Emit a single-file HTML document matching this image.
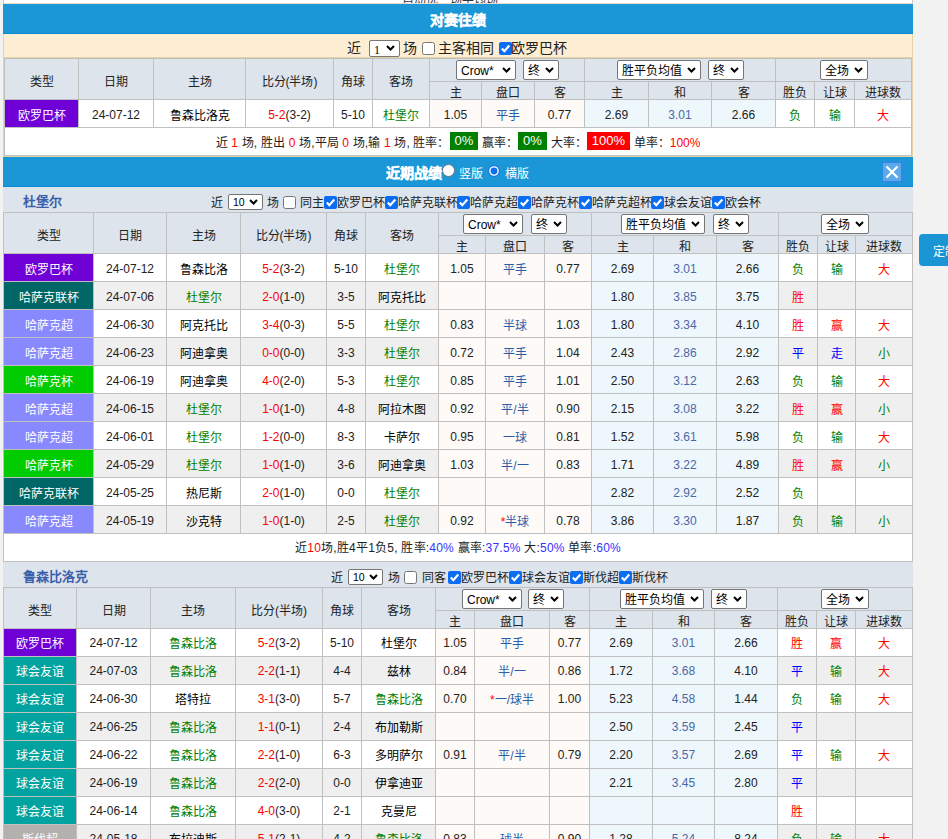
<!DOCTYPE html><html lang="zh-CN"><head><meta charset="utf-8"><style>
html,body{margin:0;padding:0}
body{width:948px;height:839px;overflow:hidden;position:relative;background:#f2f2f2;font-family:"Liberation Sans",sans-serif;font-size:12px;color:#222}
.t{position:absolute;display:flex;align-items:center;justify-content:center;white-space:nowrap;overflow:hidden}
.sel{position:absolute;background:#fff;border:1px solid #767676;border-radius:2px;color:#000;line-height:17px;padding-left:4px;box-sizing:content-box;white-space:nowrap}
.sel span{position:relative}
</style></head><body>
<div style="position:absolute;left:3px;top:0px;width:908px;height:4px;background:#fff;border-left:1px solid #c8c8c8;border-right:1px solid #c8c8c8"></div>
<div style="position:absolute;left:402px;top:-9px;font-size:12px;color:#333;white-space:nowrap">自动选一场平均场</div>
<div style="position:absolute;left:3px;top:3px;width:910px;height:1px;background:#e8dcc8"></div>
<div style="position:absolute;left:3px;top:4px;width:910px;height:30px;background:#1b96d6"></div>
<div style="position:absolute;left:3px;top:33px;width:910px;height:1px;background:#0c8acf"></div>
<div class="t" style="left:3px;top:4px;width:910px;height:29px;color:#fff;font-weight:bold;font-size:14px;-webkit-text-stroke:0.3px #fff"><span>对赛往绩</span></div>
<div style="position:absolute;left:3px;top:34px;width:910px;height:123px;background:#fdeed4"></div>
<div style="position:absolute;left:3px;top:34px;width:1px;height:123px;background:#e6d2a3"></div>
<div style="position:absolute;left:912px;top:34px;width:1px;height:123px;background:#e6d2a3"></div>
<div style="position:absolute;left:3px;top:156px;width:910px;height:1px;background:#e6d2a3"></div>
<div style="position:absolute;left:3px;top:57px;width:910px;height:1px;background:#e6d2a3"></div>
<div class="t" style="left:347px;top:35px;width:14px;height:23px;font-size:14px;justify-content:flex-start"><span>近</span></div>
<div class="sel" style="left:369px;top:40px;width:25px;height:15px;line-height:18px"><span style="font-size:12px"><span style="font-family:Liberation Serif;font-size:12px">1</span></span><svg width="9" height="6" viewBox="0 0 9 6" style="position:absolute;right:4px;top:4px"><path d="M1 1 L4.5 4.5 L8 1" fill="none" stroke="#000" stroke-width="2"/></svg></div>
<div class="t" style="left:403px;top:35px;width:15px;height:23px;font-size:14px;justify-content:flex-start"><span>场</span></div>
<svg style="position:absolute;left:422px;top:42px" width="13" height="13" viewBox="0 0 13 13"><rect x="0.5" y="0.5" width="12" height="12" rx="2" fill="#fff" stroke="#767676"/></svg>
<div class="t" style="left:438px;top:35px;width:60px;height:23px;font-size:14px;justify-content:flex-start"><span>主客相同</span></div>
<svg style="position:absolute;left:499px;top:42px" width="13" height="13" viewBox="0 0 13 13"><rect x="0" y="0" width="13" height="13" rx="2" fill="#0b6ef2"/><path d="M2.8 6.6 L5.3 9.2 L10.3 3.6" fill="none" stroke="#fff" stroke-width="2.2"/></svg>
<div class="t" style="left:511px;top:35px;width:60px;height:23px;font-size:14px;justify-content:flex-start"><span>欧罗巴杯</span></div>
<div style="position:absolute;left:4px;top:58px;width:908px;height:41px;background:#dde4ec"></div>
<div style="position:absolute;left:4px;top:99px;width:74px;height:28px;background:#6f00d6"></div>
<div style="position:absolute;left:78px;top:99px;width:75px;height:28px;background:#fff"></div>
<div style="position:absolute;left:153px;top:99px;width:92px;height:28px;background:#fff"></div>
<div style="position:absolute;left:245px;top:99px;width:88px;height:28px;background:#fff"></div>
<div style="position:absolute;left:333px;top:99px;width:39px;height:28px;background:#fff"></div>
<div style="position:absolute;left:372px;top:99px;width:57px;height:28px;background:#fff"></div>
<div style="position:absolute;left:429px;top:99px;width:52px;height:28px;background:#fdfaf7"></div>
<div style="position:absolute;left:481px;top:99px;width:53px;height:28px;background:#fdfaf7"></div>
<div style="position:absolute;left:534px;top:99px;width:50px;height:28px;background:#fdfaf7"></div>
<div style="position:absolute;left:584px;top:99px;width:64px;height:28px;background:#eef7fc"></div>
<div style="position:absolute;left:648px;top:99px;width:63px;height:28px;background:#eef7fc"></div>
<div style="position:absolute;left:711px;top:99px;width:64px;height:28px;background:#eef7fc"></div>
<div style="position:absolute;left:775px;top:99px;width:39px;height:28px;background:#fff"></div>
<div style="position:absolute;left:814px;top:99px;width:40px;height:28px;background:#fff"></div>
<div style="position:absolute;left:854px;top:99px;width:57px;height:28px;background:#fff"></div>
<div style="position:absolute;left:4px;top:127px;width:907px;height:28px;background:#fff"></div>
<div style="position:absolute;left:4px;top:58px;width:908px;height:1px;background:#c0c0c0"></div>
<div style="position:absolute;left:4px;top:58px;width:1px;height:98px;background:#c0c0c0"></div>
<div style="position:absolute;left:911px;top:58px;width:1px;height:98px;background:#c0c0c0"></div>
<div style="position:absolute;left:78px;top:58px;width:1px;height:41px;background:#c0c0c0"></div>
<div style="position:absolute;left:153px;top:58px;width:1px;height:41px;background:#c0c0c0"></div>
<div style="position:absolute;left:245px;top:58px;width:1px;height:41px;background:#c0c0c0"></div>
<div style="position:absolute;left:333px;top:58px;width:1px;height:41px;background:#c0c0c0"></div>
<div style="position:absolute;left:372px;top:58px;width:1px;height:41px;background:#c0c0c0"></div>
<div style="position:absolute;left:429px;top:58px;width:1px;height:41px;background:#c0c0c0"></div>
<div style="position:absolute;left:481px;top:81px;width:1px;height:18px;background:#c0c0c0"></div>
<div style="position:absolute;left:534px;top:81px;width:1px;height:18px;background:#c0c0c0"></div>
<div style="position:absolute;left:584px;top:58px;width:1px;height:41px;background:#c0c0c0"></div>
<div style="position:absolute;left:648px;top:81px;width:1px;height:18px;background:#c0c0c0"></div>
<div style="position:absolute;left:711px;top:81px;width:1px;height:18px;background:#c0c0c0"></div>
<div style="position:absolute;left:775px;top:58px;width:1px;height:41px;background:#c0c0c0"></div>
<div style="position:absolute;left:814px;top:81px;width:1px;height:18px;background:#c0c0c0"></div>
<div style="position:absolute;left:854px;top:81px;width:1px;height:18px;background:#c0c0c0"></div>
<div style="position:absolute;left:429px;top:81px;width:482px;height:1px;background:#c0c0c0"></div>
<div style="position:absolute;left:4px;top:99px;width:908px;height:1px;background:#c0c0c0"></div>
<div style="position:absolute;left:4px;top:127px;width:908px;height:1px;background:#c0c0c0"></div>
<div style="position:absolute;left:4px;top:155px;width:908px;height:1px;background:#c0c0c0"></div>
<div style="position:absolute;left:78px;top:99px;width:1px;height:28px;background:#c0c0c0"></div>
<div style="position:absolute;left:153px;top:99px;width:1px;height:28px;background:#c0c0c0"></div>
<div style="position:absolute;left:245px;top:99px;width:1px;height:28px;background:#c0c0c0"></div>
<div style="position:absolute;left:333px;top:99px;width:1px;height:28px;background:#c0c0c0"></div>
<div style="position:absolute;left:372px;top:99px;width:1px;height:28px;background:#c0c0c0"></div>
<div style="position:absolute;left:429px;top:99px;width:1px;height:28px;background:#c0c0c0"></div>
<div style="position:absolute;left:481px;top:99px;width:1px;height:28px;background:#c0c0c0"></div>
<div style="position:absolute;left:534px;top:99px;width:1px;height:28px;background:#c0c0c0"></div>
<div style="position:absolute;left:584px;top:99px;width:1px;height:28px;background:#c0c0c0"></div>
<div style="position:absolute;left:648px;top:99px;width:1px;height:28px;background:#c0c0c0"></div>
<div style="position:absolute;left:711px;top:99px;width:1px;height:28px;background:#c0c0c0"></div>
<div style="position:absolute;left:775px;top:99px;width:1px;height:28px;background:#c0c0c0"></div>
<div style="position:absolute;left:814px;top:99px;width:1px;height:28px;background:#c0c0c0"></div>
<div style="position:absolute;left:854px;top:99px;width:1px;height:28px;background:#c0c0c0"></div>
<div class="t" style="left:5px;top:60px;width:73px;height:40px;"><span>类型</span></div>
<div class="t" style="left:79px;top:60px;width:74px;height:40px;"><span>日期</span></div>
<div class="t" style="left:154px;top:60px;width:91px;height:40px;"><span>主场</span></div>
<div class="t" style="left:246px;top:60px;width:87px;height:40px;"><span>比分(半场)</span></div>
<div class="t" style="left:334px;top:60px;width:38px;height:40px;"><span>角球</span></div>
<div class="t" style="left:373px;top:60px;width:56px;height:40px;"><span>客场</span></div>
<div class="t" style="left:430px;top:83px;width:51px;height:17px;"><span>主</span></div>
<div class="t" style="left:482px;top:83px;width:52px;height:17px;"><span>盘口</span></div>
<div class="t" style="left:535px;top:83px;width:49px;height:17px;"><span>客</span></div>
<div class="t" style="left:585px;top:83px;width:63px;height:17px;"><span>主</span></div>
<div class="t" style="left:649px;top:83px;width:62px;height:17px;"><span>和</span></div>
<div class="t" style="left:712px;top:83px;width:63px;height:17px;"><span>客</span></div>
<div class="t" style="left:776px;top:83px;width:38px;height:17px;"><span>胜负</span></div>
<div class="t" style="left:815px;top:83px;width:39px;height:17px;"><span>让球</span></div>
<div class="t" style="left:855px;top:83px;width:56px;height:17px;"><span>进球数</span></div>
<div class="sel" style="left:456px;top:60px;width:54px;height:18px;line-height:21px"><span style="font-size:12px">Crow*</span><svg width="9" height="6" viewBox="0 0 9 6" style="position:absolute;right:4px;top:6px"><path d="M1 1 L4.5 4.5 L8 1" fill="none" stroke="#000" stroke-width="2"/></svg></div>
<div class="sel" style="left:523px;top:60px;width:30px;height:18px;line-height:21px"><span style="font-size:12px">终</span><svg width="9" height="6" viewBox="0 0 9 6" style="position:absolute;right:4px;top:6px"><path d="M1 1 L4.5 4.5 L8 1" fill="none" stroke="#000" stroke-width="2"/></svg></div>
<div class="sel" style="left:617px;top:60px;width:78px;height:18px;line-height:21px"><span style="font-size:12px">胜平负均值</span><svg width="9" height="6" viewBox="0 0 9 6" style="position:absolute;right:4px;top:6px"><path d="M1 1 L4.5 4.5 L8 1" fill="none" stroke="#000" stroke-width="2"/></svg></div>
<div class="sel" style="left:708px;top:60px;width:30px;height:18px;line-height:21px"><span style="font-size:12px">终</span><svg width="9" height="6" viewBox="0 0 9 6" style="position:absolute;right:4px;top:6px"><path d="M1 1 L4.5 4.5 L8 1" fill="none" stroke="#000" stroke-width="2"/></svg></div>
<div class="sel" style="left:820px;top:60px;width:42px;height:18px;line-height:21px"><span style="font-size:12px">全场</span><svg width="9" height="6" viewBox="0 0 9 6" style="position:absolute;right:4px;top:6px"><path d="M1 1 L4.5 4.5 L8 1" fill="none" stroke="#000" stroke-width="2"/></svg></div>
<div class="t" style="left:5px;top:101px;width:73px;height:27px;color:#fff"><span>欧罗巴杯</span></div>
<div class="t" style="left:79px;top:101px;width:74px;height:27px;"><span>24-07-12</span></div>
<div class="t" style="left:154px;top:101px;width:91px;height:27px;"><span><span style="color:#000">鲁森比洛克</span></span></div>
<div class="t" style="left:246px;top:101px;width:87px;height:27px;"><span><span style="color:#ff0000">5-2</span>(3-2)</span></div>
<div class="t" style="left:334px;top:101px;width:38px;height:27px;"><span>5-10</span></div>
<div class="t" style="left:373px;top:101px;width:56px;height:27px;"><span><span style="color:#008000">杜堡尔</span></span></div>
<div class="t" style="left:430px;top:101px;width:51px;height:27px;"><span>1.05</span></div>
<div class="t" style="left:482px;top:101px;width:52px;height:27px;"><span><span style="color:#2a5ca8">平手</span></span></div>
<div class="t" style="left:535px;top:101px;width:49px;height:27px;"><span>0.77</span></div>
<div class="t" style="left:585px;top:101px;width:63px;height:27px;"><span>2.69</span></div>
<div class="t" style="left:649px;top:101px;width:62px;height:27px;"><span><span style="color:#4a68a8">3.01</span></span></div>
<div class="t" style="left:712px;top:101px;width:63px;height:27px;"><span>2.66</span></div>
<div class="t" style="left:776px;top:101px;width:38px;height:27px;"><span><span style="color:#008000">负</span></span></div>
<div class="t" style="left:815px;top:101px;width:39px;height:27px;"><span><span style="color:#008000">输</span></span></div>
<div class="t" style="left:855px;top:101px;width:56px;height:27px;"><span><span style="color:#ff0000">大</span></span></div>
<div style="position:absolute;left:7px;top:129px;width:906px;height:26px;padding-top:1px;line-height:27px;text-align:center;white-space:nowrap;word-spacing:0.45px;margin-left:-2px">近 <span style="color:#ff0000">1</span> 场, 胜出 <span style="color:#ff0000">0</span> 场,平局 <span style="color:#ff0000">0</span> 场,输 <span style="color:#ff0000">1</span> 场, 胜率：<span style="background:#008000;color:#fff;padding:0 5px;margin:0;display:inline-block;line-height:18px;height:18px;font-size:13px;vertical-align:top;position:relative;top:2px">0%</span> 赢率：<span style="background:#008000;color:#fff;padding:0 5px;margin:0;display:inline-block;line-height:18px;height:18px;font-size:13px;vertical-align:top;position:relative;top:2px">0%</span> 大率：<span style="background:#ff0000;color:#fff;padding:0 5px;margin:0;display:inline-block;line-height:18px;height:18px;font-size:13px;vertical-align:top;position:relative;top:2px">100%</span> 单率：<span style="color:#ff0000">100%</span></div>
<div style="position:absolute;left:3px;top:157px;width:910px;height:30px;background:#1b96d6"></div>
<div style="position:absolute;left:3px;top:186px;width:910px;height:1px;background:#0c8acf"></div>
<div class="t" style="left:386px;top:157px;width:60px;height:29px;color:#fff;font-weight:bold;font-size:14px;-webkit-text-stroke:0.3px #fff;justify-content:flex-start"><span>近期战绩</span></div>
<svg style="position:absolute;left:442px;top:164px" width="13" height="13" viewBox="0 0 13 13"><circle cx="6.5" cy="6.5" r="6" fill="#fff" stroke="#767676"/></svg>
<div class="t" style="left:459px;top:158px;width:30px;height:29px;color:#fff;font-size:12px;justify-content:flex-start"><span>竖版</span></div>
<svg style="position:absolute;left:488px;top:165px" width="12" height="12" viewBox="0 0 12 12"><circle cx="6" cy="6" r="6" fill="#1a7ae8"/><circle cx="6" cy="6" r="4.8" fill="#fff"/><circle cx="6" cy="6" r="3.4" fill="#0b6ef2"/></svg>
<div class="t" style="left:505px;top:158px;width:30px;height:29px;color:#fff;font-size:12px;justify-content:flex-start"><span>横版</span></div>
<svg style="position:absolute;left:881px;top:161px" width="22" height="22" viewBox="0 0 22 22"><rect x="0" y="0" width="22" height="22" fill="#2b8be3"/><rect x="2" y="2" width="18" height="18" fill="#5ba9e9"/><path d="M5.5 5.5 L16.5 16.5 M16.5 5.5 L5.5 16.5" stroke="#fff" stroke-width="2.2"/></svg>
<div style="position:absolute;left:3px;top:187px;width:910px;height:25px;background:#dde4ec"></div>
<div class="t" style="left:23px;top:188px;width:80px;height:25px;color:#3a5fab;font-weight:bold;font-size:13px;justify-content:flex-start"><span>杜堡尔</span></div>
<div class="t" style="left:211px;top:189px;width:14px;height:25px;justify-content:flex-start"><span>近</span></div>
<div class="sel" style="left:228px;top:194px;width:29px;height:14px;line-height:15px"><span style="font-size:10.5px">10</span><svg width="9" height="6" viewBox="0 0 9 6" style="position:absolute;right:4px;top:4px"><path d="M1 1 L4.5 4.5 L8 1" fill="none" stroke="#000" stroke-width="2"/></svg></div>
<div class="t" style="left:267px;top:189px;width:14px;height:25px;justify-content:flex-start"><span>场</span></div>
<svg style="position:absolute;left:283px;top:196px" width="13" height="13" viewBox="0 0 13 13"><rect x="0.5" y="0.5" width="12" height="12" rx="2" fill="#fff" stroke="#767676"/></svg>
<div class="t" style="left:300px;top:189px;width:30px;height:25px;justify-content:flex-start"><span>同主</span></div>
<svg style="position:absolute;left:324px;top:196px" width="13" height="13" viewBox="0 0 13 13"><rect x="0" y="0" width="13" height="13" rx="2" fill="#0b6ef2"/><path d="M2.8 6.6 L5.3 9.2 L10.3 3.6" fill="none" stroke="#fff" stroke-width="2.2"/></svg>
<div class="t" style="left:337px;top:189px;width:60px;height:25px;justify-content:flex-start"><span>欧罗巴杯</span></div>
<svg style="position:absolute;left:385px;top:196px" width="13" height="13" viewBox="0 0 13 13"><rect x="0" y="0" width="13" height="13" rx="2" fill="#0b6ef2"/><path d="M2.8 6.6 L5.3 9.2 L10.3 3.6" fill="none" stroke="#fff" stroke-width="2.2"/></svg>
<div class="t" style="left:398px;top:189px;width:70px;height:25px;justify-content:flex-start"><span>哈萨克联杯</span></div>
<svg style="position:absolute;left:457px;top:196px" width="13" height="13" viewBox="0 0 13 13"><rect x="0" y="0" width="13" height="13" rx="2" fill="#0b6ef2"/><path d="M2.8 6.6 L5.3 9.2 L10.3 3.6" fill="none" stroke="#fff" stroke-width="2.2"/></svg>
<div class="t" style="left:470px;top:189px;width:60px;height:25px;justify-content:flex-start"><span>哈萨克超</span></div>
<svg style="position:absolute;left:518px;top:196px" width="13" height="13" viewBox="0 0 13 13"><rect x="0" y="0" width="13" height="13" rx="2" fill="#0b6ef2"/><path d="M2.8 6.6 L5.3 9.2 L10.3 3.6" fill="none" stroke="#fff" stroke-width="2.2"/></svg>
<div class="t" style="left:531px;top:189px;width:60px;height:25px;justify-content:flex-start"><span>哈萨克杯</span></div>
<svg style="position:absolute;left:579px;top:196px" width="13" height="13" viewBox="0 0 13 13"><rect x="0" y="0" width="13" height="13" rx="2" fill="#0b6ef2"/><path d="M2.8 6.6 L5.3 9.2 L10.3 3.6" fill="none" stroke="#fff" stroke-width="2.2"/></svg>
<div class="t" style="left:592px;top:189px;width:70px;height:25px;justify-content:flex-start"><span>哈萨克超杯</span></div>
<svg style="position:absolute;left:651px;top:196px" width="13" height="13" viewBox="0 0 13 13"><rect x="0" y="0" width="13" height="13" rx="2" fill="#0b6ef2"/><path d="M2.8 6.6 L5.3 9.2 L10.3 3.6" fill="none" stroke="#fff" stroke-width="2.2"/></svg>
<div class="t" style="left:664px;top:189px;width:60px;height:25px;justify-content:flex-start"><span>球会友谊</span></div>
<svg style="position:absolute;left:712px;top:196px" width="13" height="13" viewBox="0 0 13 13"><rect x="0" y="0" width="13" height="13" rx="2" fill="#0b6ef2"/><path d="M2.8 6.6 L5.3 9.2 L10.3 3.6" fill="none" stroke="#fff" stroke-width="2.2"/></svg>
<div class="t" style="left:725px;top:189px;width:50px;height:25px;justify-content:flex-start"><span>欧会杯</span></div>
<div style="position:absolute;left:3px;top:212px;width:910px;height:41px;background:#dde4ec"></div>
<div style="position:absolute;left:3px;top:253px;width:90px;height:28px;background:#6f00d6"></div>
<div style="position:absolute;left:93px;top:253px;width:73px;height:28px;background:#fff"></div>
<div style="position:absolute;left:166px;top:253px;width:74px;height:28px;background:#fff"></div>
<div style="position:absolute;left:240px;top:253px;width:86px;height:28px;background:#fff"></div>
<div style="position:absolute;left:326px;top:253px;width:39px;height:28px;background:#fff"></div>
<div style="position:absolute;left:365px;top:253px;width:73px;height:28px;background:#fff"></div>
<div style="position:absolute;left:438px;top:253px;width:47px;height:28px;background:#fdfaf7"></div>
<div style="position:absolute;left:485px;top:253px;width:59px;height:28px;background:#fdfaf7"></div>
<div style="position:absolute;left:544px;top:253px;width:47px;height:28px;background:#fdfaf7"></div>
<div style="position:absolute;left:591px;top:253px;width:62px;height:28px;background:#eef7fc"></div>
<div style="position:absolute;left:653px;top:253px;width:63px;height:28px;background:#eef7fc"></div>
<div style="position:absolute;left:716px;top:253px;width:62px;height:28px;background:#eef7fc"></div>
<div style="position:absolute;left:778px;top:253px;width:39px;height:28px;background:#fff"></div>
<div style="position:absolute;left:817px;top:253px;width:38px;height:28px;background:#fff"></div>
<div style="position:absolute;left:855px;top:253px;width:57px;height:28px;background:#fff"></div>
<div style="position:absolute;left:3px;top:281px;width:90px;height:28px;background:#006666"></div>
<div style="position:absolute;left:93px;top:281px;width:73px;height:28px;background:#efefef"></div>
<div style="position:absolute;left:166px;top:281px;width:74px;height:28px;background:#efefef"></div>
<div style="position:absolute;left:240px;top:281px;width:86px;height:28px;background:#efefef"></div>
<div style="position:absolute;left:326px;top:281px;width:39px;height:28px;background:#efefef"></div>
<div style="position:absolute;left:365px;top:281px;width:73px;height:28px;background:#efefef"></div>
<div style="position:absolute;left:438px;top:281px;width:47px;height:28px;background:#fdfaf7"></div>
<div style="position:absolute;left:485px;top:281px;width:59px;height:28px;background:#fdfaf7"></div>
<div style="position:absolute;left:544px;top:281px;width:47px;height:28px;background:#fdfaf7"></div>
<div style="position:absolute;left:591px;top:281px;width:62px;height:28px;background:#eef7fc"></div>
<div style="position:absolute;left:653px;top:281px;width:63px;height:28px;background:#eef7fc"></div>
<div style="position:absolute;left:716px;top:281px;width:62px;height:28px;background:#eef7fc"></div>
<div style="position:absolute;left:778px;top:281px;width:39px;height:28px;background:#efefef"></div>
<div style="position:absolute;left:817px;top:281px;width:38px;height:28px;background:#efefef"></div>
<div style="position:absolute;left:855px;top:281px;width:57px;height:28px;background:#efefef"></div>
<div style="position:absolute;left:3px;top:309px;width:90px;height:28px;background:#8989ff"></div>
<div style="position:absolute;left:93px;top:309px;width:73px;height:28px;background:#fff"></div>
<div style="position:absolute;left:166px;top:309px;width:74px;height:28px;background:#fff"></div>
<div style="position:absolute;left:240px;top:309px;width:86px;height:28px;background:#fff"></div>
<div style="position:absolute;left:326px;top:309px;width:39px;height:28px;background:#fff"></div>
<div style="position:absolute;left:365px;top:309px;width:73px;height:28px;background:#fff"></div>
<div style="position:absolute;left:438px;top:309px;width:47px;height:28px;background:#fdfaf7"></div>
<div style="position:absolute;left:485px;top:309px;width:59px;height:28px;background:#fdfaf7"></div>
<div style="position:absolute;left:544px;top:309px;width:47px;height:28px;background:#fdfaf7"></div>
<div style="position:absolute;left:591px;top:309px;width:62px;height:28px;background:#eef7fc"></div>
<div style="position:absolute;left:653px;top:309px;width:63px;height:28px;background:#eef7fc"></div>
<div style="position:absolute;left:716px;top:309px;width:62px;height:28px;background:#eef7fc"></div>
<div style="position:absolute;left:778px;top:309px;width:39px;height:28px;background:#fff"></div>
<div style="position:absolute;left:817px;top:309px;width:38px;height:28px;background:#fff"></div>
<div style="position:absolute;left:855px;top:309px;width:57px;height:28px;background:#fff"></div>
<div style="position:absolute;left:3px;top:337px;width:90px;height:28px;background:#8989ff"></div>
<div style="position:absolute;left:93px;top:337px;width:73px;height:28px;background:#efefef"></div>
<div style="position:absolute;left:166px;top:337px;width:74px;height:28px;background:#efefef"></div>
<div style="position:absolute;left:240px;top:337px;width:86px;height:28px;background:#efefef"></div>
<div style="position:absolute;left:326px;top:337px;width:39px;height:28px;background:#efefef"></div>
<div style="position:absolute;left:365px;top:337px;width:73px;height:28px;background:#efefef"></div>
<div style="position:absolute;left:438px;top:337px;width:47px;height:28px;background:#fdfaf7"></div>
<div style="position:absolute;left:485px;top:337px;width:59px;height:28px;background:#fdfaf7"></div>
<div style="position:absolute;left:544px;top:337px;width:47px;height:28px;background:#fdfaf7"></div>
<div style="position:absolute;left:591px;top:337px;width:62px;height:28px;background:#eef7fc"></div>
<div style="position:absolute;left:653px;top:337px;width:63px;height:28px;background:#eef7fc"></div>
<div style="position:absolute;left:716px;top:337px;width:62px;height:28px;background:#eef7fc"></div>
<div style="position:absolute;left:778px;top:337px;width:39px;height:28px;background:#efefef"></div>
<div style="position:absolute;left:817px;top:337px;width:38px;height:28px;background:#efefef"></div>
<div style="position:absolute;left:855px;top:337px;width:57px;height:28px;background:#efefef"></div>
<div style="position:absolute;left:3px;top:365px;width:90px;height:28px;background:#00cc00"></div>
<div style="position:absolute;left:93px;top:365px;width:73px;height:28px;background:#fff"></div>
<div style="position:absolute;left:166px;top:365px;width:74px;height:28px;background:#fff"></div>
<div style="position:absolute;left:240px;top:365px;width:86px;height:28px;background:#fff"></div>
<div style="position:absolute;left:326px;top:365px;width:39px;height:28px;background:#fff"></div>
<div style="position:absolute;left:365px;top:365px;width:73px;height:28px;background:#fff"></div>
<div style="position:absolute;left:438px;top:365px;width:47px;height:28px;background:#fdfaf7"></div>
<div style="position:absolute;left:485px;top:365px;width:59px;height:28px;background:#fdfaf7"></div>
<div style="position:absolute;left:544px;top:365px;width:47px;height:28px;background:#fdfaf7"></div>
<div style="position:absolute;left:591px;top:365px;width:62px;height:28px;background:#eef7fc"></div>
<div style="position:absolute;left:653px;top:365px;width:63px;height:28px;background:#eef7fc"></div>
<div style="position:absolute;left:716px;top:365px;width:62px;height:28px;background:#eef7fc"></div>
<div style="position:absolute;left:778px;top:365px;width:39px;height:28px;background:#fff"></div>
<div style="position:absolute;left:817px;top:365px;width:38px;height:28px;background:#fff"></div>
<div style="position:absolute;left:855px;top:365px;width:57px;height:28px;background:#fff"></div>
<div style="position:absolute;left:3px;top:393px;width:90px;height:28px;background:#8989ff"></div>
<div style="position:absolute;left:93px;top:393px;width:73px;height:28px;background:#efefef"></div>
<div style="position:absolute;left:166px;top:393px;width:74px;height:28px;background:#efefef"></div>
<div style="position:absolute;left:240px;top:393px;width:86px;height:28px;background:#efefef"></div>
<div style="position:absolute;left:326px;top:393px;width:39px;height:28px;background:#efefef"></div>
<div style="position:absolute;left:365px;top:393px;width:73px;height:28px;background:#efefef"></div>
<div style="position:absolute;left:438px;top:393px;width:47px;height:28px;background:#fdfaf7"></div>
<div style="position:absolute;left:485px;top:393px;width:59px;height:28px;background:#fdfaf7"></div>
<div style="position:absolute;left:544px;top:393px;width:47px;height:28px;background:#fdfaf7"></div>
<div style="position:absolute;left:591px;top:393px;width:62px;height:28px;background:#eef7fc"></div>
<div style="position:absolute;left:653px;top:393px;width:63px;height:28px;background:#eef7fc"></div>
<div style="position:absolute;left:716px;top:393px;width:62px;height:28px;background:#eef7fc"></div>
<div style="position:absolute;left:778px;top:393px;width:39px;height:28px;background:#efefef"></div>
<div style="position:absolute;left:817px;top:393px;width:38px;height:28px;background:#efefef"></div>
<div style="position:absolute;left:855px;top:393px;width:57px;height:28px;background:#efefef"></div>
<div style="position:absolute;left:3px;top:421px;width:90px;height:28px;background:#8989ff"></div>
<div style="position:absolute;left:93px;top:421px;width:73px;height:28px;background:#fff"></div>
<div style="position:absolute;left:166px;top:421px;width:74px;height:28px;background:#fff"></div>
<div style="position:absolute;left:240px;top:421px;width:86px;height:28px;background:#fff"></div>
<div style="position:absolute;left:326px;top:421px;width:39px;height:28px;background:#fff"></div>
<div style="position:absolute;left:365px;top:421px;width:73px;height:28px;background:#fff"></div>
<div style="position:absolute;left:438px;top:421px;width:47px;height:28px;background:#fdfaf7"></div>
<div style="position:absolute;left:485px;top:421px;width:59px;height:28px;background:#fdfaf7"></div>
<div style="position:absolute;left:544px;top:421px;width:47px;height:28px;background:#fdfaf7"></div>
<div style="position:absolute;left:591px;top:421px;width:62px;height:28px;background:#eef7fc"></div>
<div style="position:absolute;left:653px;top:421px;width:63px;height:28px;background:#eef7fc"></div>
<div style="position:absolute;left:716px;top:421px;width:62px;height:28px;background:#eef7fc"></div>
<div style="position:absolute;left:778px;top:421px;width:39px;height:28px;background:#fff"></div>
<div style="position:absolute;left:817px;top:421px;width:38px;height:28px;background:#fff"></div>
<div style="position:absolute;left:855px;top:421px;width:57px;height:28px;background:#fff"></div>
<div style="position:absolute;left:3px;top:449px;width:90px;height:28px;background:#00cc00"></div>
<div style="position:absolute;left:93px;top:449px;width:73px;height:28px;background:#efefef"></div>
<div style="position:absolute;left:166px;top:449px;width:74px;height:28px;background:#efefef"></div>
<div style="position:absolute;left:240px;top:449px;width:86px;height:28px;background:#efefef"></div>
<div style="position:absolute;left:326px;top:449px;width:39px;height:28px;background:#efefef"></div>
<div style="position:absolute;left:365px;top:449px;width:73px;height:28px;background:#efefef"></div>
<div style="position:absolute;left:438px;top:449px;width:47px;height:28px;background:#fdfaf7"></div>
<div style="position:absolute;left:485px;top:449px;width:59px;height:28px;background:#fdfaf7"></div>
<div style="position:absolute;left:544px;top:449px;width:47px;height:28px;background:#fdfaf7"></div>
<div style="position:absolute;left:591px;top:449px;width:62px;height:28px;background:#eef7fc"></div>
<div style="position:absolute;left:653px;top:449px;width:63px;height:28px;background:#eef7fc"></div>
<div style="position:absolute;left:716px;top:449px;width:62px;height:28px;background:#eef7fc"></div>
<div style="position:absolute;left:778px;top:449px;width:39px;height:28px;background:#efefef"></div>
<div style="position:absolute;left:817px;top:449px;width:38px;height:28px;background:#efefef"></div>
<div style="position:absolute;left:855px;top:449px;width:57px;height:28px;background:#efefef"></div>
<div style="position:absolute;left:3px;top:477px;width:90px;height:28px;background:#006666"></div>
<div style="position:absolute;left:93px;top:477px;width:73px;height:28px;background:#fff"></div>
<div style="position:absolute;left:166px;top:477px;width:74px;height:28px;background:#fff"></div>
<div style="position:absolute;left:240px;top:477px;width:86px;height:28px;background:#fff"></div>
<div style="position:absolute;left:326px;top:477px;width:39px;height:28px;background:#fff"></div>
<div style="position:absolute;left:365px;top:477px;width:73px;height:28px;background:#fff"></div>
<div style="position:absolute;left:438px;top:477px;width:47px;height:28px;background:#fdfaf7"></div>
<div style="position:absolute;left:485px;top:477px;width:59px;height:28px;background:#fdfaf7"></div>
<div style="position:absolute;left:544px;top:477px;width:47px;height:28px;background:#fdfaf7"></div>
<div style="position:absolute;left:591px;top:477px;width:62px;height:28px;background:#eef7fc"></div>
<div style="position:absolute;left:653px;top:477px;width:63px;height:28px;background:#eef7fc"></div>
<div style="position:absolute;left:716px;top:477px;width:62px;height:28px;background:#eef7fc"></div>
<div style="position:absolute;left:778px;top:477px;width:39px;height:28px;background:#fff"></div>
<div style="position:absolute;left:817px;top:477px;width:38px;height:28px;background:#fff"></div>
<div style="position:absolute;left:855px;top:477px;width:57px;height:28px;background:#fff"></div>
<div style="position:absolute;left:3px;top:505px;width:90px;height:28px;background:#8989ff"></div>
<div style="position:absolute;left:93px;top:505px;width:73px;height:28px;background:#efefef"></div>
<div style="position:absolute;left:166px;top:505px;width:74px;height:28px;background:#efefef"></div>
<div style="position:absolute;left:240px;top:505px;width:86px;height:28px;background:#efefef"></div>
<div style="position:absolute;left:326px;top:505px;width:39px;height:28px;background:#efefef"></div>
<div style="position:absolute;left:365px;top:505px;width:73px;height:28px;background:#efefef"></div>
<div style="position:absolute;left:438px;top:505px;width:47px;height:28px;background:#fdfaf7"></div>
<div style="position:absolute;left:485px;top:505px;width:59px;height:28px;background:#fdfaf7"></div>
<div style="position:absolute;left:544px;top:505px;width:47px;height:28px;background:#fdfaf7"></div>
<div style="position:absolute;left:591px;top:505px;width:62px;height:28px;background:#eef7fc"></div>
<div style="position:absolute;left:653px;top:505px;width:63px;height:28px;background:#eef7fc"></div>
<div style="position:absolute;left:716px;top:505px;width:62px;height:28px;background:#eef7fc"></div>
<div style="position:absolute;left:778px;top:505px;width:39px;height:28px;background:#efefef"></div>
<div style="position:absolute;left:817px;top:505px;width:38px;height:28px;background:#efefef"></div>
<div style="position:absolute;left:855px;top:505px;width:57px;height:28px;background:#efefef"></div>
<div style="position:absolute;left:3px;top:533px;width:909px;height:28px;background:#fff"></div>
<div style="position:absolute;left:3px;top:212px;width:910px;height:1px;background:#c0c0c0"></div>
<div style="position:absolute;left:3px;top:212px;width:1px;height:350px;background:#c0c0c0"></div>
<div style="position:absolute;left:912px;top:212px;width:1px;height:350px;background:#c0c0c0"></div>
<div style="position:absolute;left:93px;top:212px;width:1px;height:41px;background:#c0c0c0"></div>
<div style="position:absolute;left:166px;top:212px;width:1px;height:41px;background:#c0c0c0"></div>
<div style="position:absolute;left:240px;top:212px;width:1px;height:41px;background:#c0c0c0"></div>
<div style="position:absolute;left:326px;top:212px;width:1px;height:41px;background:#c0c0c0"></div>
<div style="position:absolute;left:365px;top:212px;width:1px;height:41px;background:#c0c0c0"></div>
<div style="position:absolute;left:438px;top:212px;width:1px;height:41px;background:#c0c0c0"></div>
<div style="position:absolute;left:485px;top:235px;width:1px;height:18px;background:#c0c0c0"></div>
<div style="position:absolute;left:544px;top:235px;width:1px;height:18px;background:#c0c0c0"></div>
<div style="position:absolute;left:591px;top:212px;width:1px;height:41px;background:#c0c0c0"></div>
<div style="position:absolute;left:653px;top:235px;width:1px;height:18px;background:#c0c0c0"></div>
<div style="position:absolute;left:716px;top:235px;width:1px;height:18px;background:#c0c0c0"></div>
<div style="position:absolute;left:778px;top:212px;width:1px;height:41px;background:#c0c0c0"></div>
<div style="position:absolute;left:817px;top:235px;width:1px;height:18px;background:#c0c0c0"></div>
<div style="position:absolute;left:855px;top:235px;width:1px;height:18px;background:#c0c0c0"></div>
<div style="position:absolute;left:438px;top:235px;width:474px;height:1px;background:#c0c0c0"></div>
<div style="position:absolute;left:3px;top:253px;width:910px;height:1px;background:#c0c0c0"></div>
<div style="position:absolute;left:3px;top:281px;width:910px;height:1px;background:#c0c0c0"></div>
<div style="position:absolute;left:3px;top:309px;width:910px;height:1px;background:#c0c0c0"></div>
<div style="position:absolute;left:3px;top:337px;width:910px;height:1px;background:#c0c0c0"></div>
<div style="position:absolute;left:3px;top:365px;width:910px;height:1px;background:#c0c0c0"></div>
<div style="position:absolute;left:3px;top:393px;width:910px;height:1px;background:#c0c0c0"></div>
<div style="position:absolute;left:3px;top:421px;width:910px;height:1px;background:#c0c0c0"></div>
<div style="position:absolute;left:3px;top:449px;width:910px;height:1px;background:#c0c0c0"></div>
<div style="position:absolute;left:3px;top:477px;width:910px;height:1px;background:#c0c0c0"></div>
<div style="position:absolute;left:3px;top:505px;width:910px;height:1px;background:#c0c0c0"></div>
<div style="position:absolute;left:3px;top:533px;width:910px;height:1px;background:#c0c0c0"></div>
<div style="position:absolute;left:3px;top:561px;width:910px;height:1px;background:#c0c0c0"></div>
<div style="position:absolute;left:93px;top:253px;width:1px;height:280px;background:#c0c0c0"></div>
<div style="position:absolute;left:166px;top:253px;width:1px;height:280px;background:#c0c0c0"></div>
<div style="position:absolute;left:240px;top:253px;width:1px;height:280px;background:#c0c0c0"></div>
<div style="position:absolute;left:326px;top:253px;width:1px;height:280px;background:#c0c0c0"></div>
<div style="position:absolute;left:365px;top:253px;width:1px;height:280px;background:#c0c0c0"></div>
<div style="position:absolute;left:438px;top:253px;width:1px;height:280px;background:#c0c0c0"></div>
<div style="position:absolute;left:485px;top:253px;width:1px;height:280px;background:#c0c0c0"></div>
<div style="position:absolute;left:544px;top:253px;width:1px;height:280px;background:#c0c0c0"></div>
<div style="position:absolute;left:591px;top:253px;width:1px;height:280px;background:#c0c0c0"></div>
<div style="position:absolute;left:653px;top:253px;width:1px;height:280px;background:#c0c0c0"></div>
<div style="position:absolute;left:716px;top:253px;width:1px;height:280px;background:#c0c0c0"></div>
<div style="position:absolute;left:778px;top:253px;width:1px;height:280px;background:#c0c0c0"></div>
<div style="position:absolute;left:817px;top:253px;width:1px;height:280px;background:#c0c0c0"></div>
<div style="position:absolute;left:855px;top:253px;width:1px;height:280px;background:#c0c0c0"></div>
<div class="t" style="left:4px;top:214px;width:89px;height:40px;"><span>类型</span></div>
<div class="t" style="left:94px;top:214px;width:72px;height:40px;"><span>日期</span></div>
<div class="t" style="left:167px;top:214px;width:73px;height:40px;"><span>主场</span></div>
<div class="t" style="left:241px;top:214px;width:85px;height:40px;"><span>比分(半场)</span></div>
<div class="t" style="left:327px;top:214px;width:38px;height:40px;"><span>角球</span></div>
<div class="t" style="left:366px;top:214px;width:72px;height:40px;"><span>客场</span></div>
<div class="t" style="left:439px;top:237px;width:46px;height:17px;"><span>主</span></div>
<div class="t" style="left:486px;top:237px;width:58px;height:17px;"><span>盘口</span></div>
<div class="t" style="left:545px;top:237px;width:46px;height:17px;"><span>客</span></div>
<div class="t" style="left:592px;top:237px;width:61px;height:17px;"><span>主</span></div>
<div class="t" style="left:654px;top:237px;width:62px;height:17px;"><span>和</span></div>
<div class="t" style="left:717px;top:237px;width:61px;height:17px;"><span>客</span></div>
<div class="t" style="left:779px;top:237px;width:38px;height:17px;"><span>胜负</span></div>
<div class="t" style="left:818px;top:237px;width:37px;height:17px;"><span>让球</span></div>
<div class="t" style="left:856px;top:237px;width:56px;height:17px;"><span>进球数</span></div>
<div class="sel" style="left:463px;top:214px;width:54px;height:18px;line-height:21px"><span style="font-size:12px">Crow*</span><svg width="9" height="6" viewBox="0 0 9 6" style="position:absolute;right:4px;top:6px"><path d="M1 1 L4.5 4.5 L8 1" fill="none" stroke="#000" stroke-width="2"/></svg></div>
<div class="sel" style="left:531px;top:214px;width:30px;height:18px;line-height:21px"><span style="font-size:12px">终</span><svg width="9" height="6" viewBox="0 0 9 6" style="position:absolute;right:4px;top:6px"><path d="M1 1 L4.5 4.5 L8 1" fill="none" stroke="#000" stroke-width="2"/></svg></div>
<div class="sel" style="left:621px;top:214px;width:78px;height:18px;line-height:21px"><span style="font-size:12px">胜平负均值</span><svg width="9" height="6" viewBox="0 0 9 6" style="position:absolute;right:4px;top:6px"><path d="M1 1 L4.5 4.5 L8 1" fill="none" stroke="#000" stroke-width="2"/></svg></div>
<div class="sel" style="left:713px;top:214px;width:30px;height:18px;line-height:21px"><span style="font-size:12px">终</span><svg width="9" height="6" viewBox="0 0 9 6" style="position:absolute;right:4px;top:6px"><path d="M1 1 L4.5 4.5 L8 1" fill="none" stroke="#000" stroke-width="2"/></svg></div>
<div class="sel" style="left:821px;top:214px;width:42px;height:18px;line-height:21px"><span style="font-size:12px">全场</span><svg width="9" height="6" viewBox="0 0 9 6" style="position:absolute;right:4px;top:6px"><path d="M1 1 L4.5 4.5 L8 1" fill="none" stroke="#000" stroke-width="2"/></svg></div>
<div class="t" style="left:4px;top:255px;width:89px;height:27px;color:#fff"><span>欧罗巴杯</span></div>
<div class="t" style="left:94px;top:255px;width:72px;height:27px;"><span>24-07-12</span></div>
<div class="t" style="left:167px;top:255px;width:73px;height:27px;"><span><span style="color:#000">鲁森比洛</span></span></div>
<div class="t" style="left:241px;top:255px;width:85px;height:27px;"><span><span style="color:#ff0000">5-2</span>(3-2)</span></div>
<div class="t" style="left:327px;top:255px;width:38px;height:27px;"><span>5-10</span></div>
<div class="t" style="left:366px;top:255px;width:72px;height:27px;"><span><span style="color:#008000">杜堡尔</span></span></div>
<div class="t" style="left:439px;top:255px;width:46px;height:27px;"><span>1.05</span></div>
<div class="t" style="left:486px;top:255px;width:58px;height:27px;"><span><span style="color:#2a5ca8">平手</span></span></div>
<div class="t" style="left:545px;top:255px;width:46px;height:27px;"><span>0.77</span></div>
<div class="t" style="left:592px;top:255px;width:61px;height:27px;"><span>2.69</span></div>
<div class="t" style="left:654px;top:255px;width:62px;height:27px;"><span><span style="color:#4a68a8">3.01</span></span></div>
<div class="t" style="left:717px;top:255px;width:61px;height:27px;"><span>2.66</span></div>
<div class="t" style="left:779px;top:255px;width:38px;height:27px;"><span><span style="color:#008000">负</span></span></div>
<div class="t" style="left:818px;top:255px;width:37px;height:27px;"><span><span style="color:#008000">输</span></span></div>
<div class="t" style="left:856px;top:255px;width:56px;height:27px;"><span><span style="color:#ff0000">大</span></span></div>
<div class="t" style="left:4px;top:283px;width:89px;height:27px;color:#fff"><span>哈萨克联杯</span></div>
<div class="t" style="left:94px;top:283px;width:72px;height:27px;"><span>24-07-06</span></div>
<div class="t" style="left:167px;top:283px;width:73px;height:27px;"><span><span style="color:#008000">杜堡尔</span></span></div>
<div class="t" style="left:241px;top:283px;width:85px;height:27px;"><span><span style="color:#ff0000">2-0</span>(1-0)</span></div>
<div class="t" style="left:327px;top:283px;width:38px;height:27px;"><span>3-5</span></div>
<div class="t" style="left:366px;top:283px;width:72px;height:27px;"><span><span style="color:#000">阿克托比</span></span></div>
<div class="t" style="left:592px;top:283px;width:61px;height:27px;"><span>1.80</span></div>
<div class="t" style="left:654px;top:283px;width:62px;height:27px;"><span><span style="color:#4a68a8">3.85</span></span></div>
<div class="t" style="left:717px;top:283px;width:61px;height:27px;"><span>3.75</span></div>
<div class="t" style="left:779px;top:283px;width:38px;height:27px;"><span><span style="color:#ff0000">胜</span></span></div>
<div class="t" style="left:4px;top:311px;width:89px;height:27px;color:#fff"><span>哈萨克超</span></div>
<div class="t" style="left:94px;top:311px;width:72px;height:27px;"><span>24-06-30</span></div>
<div class="t" style="left:167px;top:311px;width:73px;height:27px;"><span><span style="color:#000">阿克托比</span></span></div>
<div class="t" style="left:241px;top:311px;width:85px;height:27px;"><span><span style="color:#ff0000">3-4</span>(0-3)</span></div>
<div class="t" style="left:327px;top:311px;width:38px;height:27px;"><span>5-5</span></div>
<div class="t" style="left:366px;top:311px;width:72px;height:27px;"><span><span style="color:#008000">杜堡尔</span></span></div>
<div class="t" style="left:439px;top:311px;width:46px;height:27px;"><span>0.83</span></div>
<div class="t" style="left:486px;top:311px;width:58px;height:27px;"><span><span style="color:#2a5ca8">半球</span></span></div>
<div class="t" style="left:545px;top:311px;width:46px;height:27px;"><span>1.03</span></div>
<div class="t" style="left:592px;top:311px;width:61px;height:27px;"><span>1.80</span></div>
<div class="t" style="left:654px;top:311px;width:62px;height:27px;"><span><span style="color:#4a68a8">3.34</span></span></div>
<div class="t" style="left:717px;top:311px;width:61px;height:27px;"><span>4.10</span></div>
<div class="t" style="left:779px;top:311px;width:38px;height:27px;"><span><span style="color:#ff0000">胜</span></span></div>
<div class="t" style="left:818px;top:311px;width:37px;height:27px;"><span><span style="color:#ff0000">赢</span></span></div>
<div class="t" style="left:856px;top:311px;width:56px;height:27px;"><span><span style="color:#ff0000">大</span></span></div>
<div class="t" style="left:4px;top:339px;width:89px;height:27px;color:#fff"><span>哈萨克超</span></div>
<div class="t" style="left:94px;top:339px;width:72px;height:27px;"><span>24-06-23</span></div>
<div class="t" style="left:167px;top:339px;width:73px;height:27px;"><span><span style="color:#000">阿迪拿奥</span></span></div>
<div class="t" style="left:241px;top:339px;width:85px;height:27px;"><span><span style="color:#ff0000">0-0</span>(0-0)</span></div>
<div class="t" style="left:327px;top:339px;width:38px;height:27px;"><span>3-3</span></div>
<div class="t" style="left:366px;top:339px;width:72px;height:27px;"><span><span style="color:#008000">杜堡尔</span></span></div>
<div class="t" style="left:439px;top:339px;width:46px;height:27px;"><span>0.72</span></div>
<div class="t" style="left:486px;top:339px;width:58px;height:27px;"><span><span style="color:#2a5ca8">平手</span></span></div>
<div class="t" style="left:545px;top:339px;width:46px;height:27px;"><span>1.04</span></div>
<div class="t" style="left:592px;top:339px;width:61px;height:27px;"><span>2.43</span></div>
<div class="t" style="left:654px;top:339px;width:62px;height:27px;"><span><span style="color:#4a68a8">2.86</span></span></div>
<div class="t" style="left:717px;top:339px;width:61px;height:27px;"><span>2.92</span></div>
<div class="t" style="left:779px;top:339px;width:38px;height:27px;"><span><span style="color:#0000ff">平</span></span></div>
<div class="t" style="left:818px;top:339px;width:37px;height:27px;"><span><span style="color:#0000ff">走</span></span></div>
<div class="t" style="left:856px;top:339px;width:56px;height:27px;"><span><span style="color:#008000">小</span></span></div>
<div class="t" style="left:4px;top:367px;width:89px;height:27px;color:#fff"><span>哈萨克杯</span></div>
<div class="t" style="left:94px;top:367px;width:72px;height:27px;"><span>24-06-19</span></div>
<div class="t" style="left:167px;top:367px;width:73px;height:27px;"><span><span style="color:#000">阿迪拿奥</span></span></div>
<div class="t" style="left:241px;top:367px;width:85px;height:27px;"><span><span style="color:#ff0000">4-0</span>(2-0)</span></div>
<div class="t" style="left:327px;top:367px;width:38px;height:27px;"><span>5-3</span></div>
<div class="t" style="left:366px;top:367px;width:72px;height:27px;"><span><span style="color:#008000">杜堡尔</span></span></div>
<div class="t" style="left:439px;top:367px;width:46px;height:27px;"><span>0.85</span></div>
<div class="t" style="left:486px;top:367px;width:58px;height:27px;"><span><span style="color:#2a5ca8">平手</span></span></div>
<div class="t" style="left:545px;top:367px;width:46px;height:27px;"><span>1.01</span></div>
<div class="t" style="left:592px;top:367px;width:61px;height:27px;"><span>2.50</span></div>
<div class="t" style="left:654px;top:367px;width:62px;height:27px;"><span><span style="color:#4a68a8">3.12</span></span></div>
<div class="t" style="left:717px;top:367px;width:61px;height:27px;"><span>2.63</span></div>
<div class="t" style="left:779px;top:367px;width:38px;height:27px;"><span><span style="color:#008000">负</span></span></div>
<div class="t" style="left:818px;top:367px;width:37px;height:27px;"><span><span style="color:#008000">输</span></span></div>
<div class="t" style="left:856px;top:367px;width:56px;height:27px;"><span><span style="color:#ff0000">大</span></span></div>
<div class="t" style="left:4px;top:395px;width:89px;height:27px;color:#fff"><span>哈萨克超</span></div>
<div class="t" style="left:94px;top:395px;width:72px;height:27px;"><span>24-06-15</span></div>
<div class="t" style="left:167px;top:395px;width:73px;height:27px;"><span><span style="color:#008000">杜堡尔</span></span></div>
<div class="t" style="left:241px;top:395px;width:85px;height:27px;"><span><span style="color:#ff0000">1-0</span>(1-0)</span></div>
<div class="t" style="left:327px;top:395px;width:38px;height:27px;"><span>4-8</span></div>
<div class="t" style="left:366px;top:395px;width:72px;height:27px;"><span><span style="color:#000">阿拉木图</span></span></div>
<div class="t" style="left:439px;top:395px;width:46px;height:27px;"><span>0.92</span></div>
<div class="t" style="left:486px;top:395px;width:58px;height:27px;"><span><span style="color:#2a5ca8">平/半</span></span></div>
<div class="t" style="left:545px;top:395px;width:46px;height:27px;"><span>0.90</span></div>
<div class="t" style="left:592px;top:395px;width:61px;height:27px;"><span>2.15</span></div>
<div class="t" style="left:654px;top:395px;width:62px;height:27px;"><span><span style="color:#4a68a8">3.08</span></span></div>
<div class="t" style="left:717px;top:395px;width:61px;height:27px;"><span>3.22</span></div>
<div class="t" style="left:779px;top:395px;width:38px;height:27px;"><span><span style="color:#ff0000">胜</span></span></div>
<div class="t" style="left:818px;top:395px;width:37px;height:27px;"><span><span style="color:#ff0000">赢</span></span></div>
<div class="t" style="left:856px;top:395px;width:56px;height:27px;"><span><span style="color:#008000">小</span></span></div>
<div class="t" style="left:4px;top:423px;width:89px;height:27px;color:#fff"><span>哈萨克超</span></div>
<div class="t" style="left:94px;top:423px;width:72px;height:27px;"><span>24-06-01</span></div>
<div class="t" style="left:167px;top:423px;width:73px;height:27px;"><span><span style="color:#008000">杜堡尔</span></span></div>
<div class="t" style="left:241px;top:423px;width:85px;height:27px;"><span><span style="color:#ff0000">1-2</span>(0-0)</span></div>
<div class="t" style="left:327px;top:423px;width:38px;height:27px;"><span>8-3</span></div>
<div class="t" style="left:366px;top:423px;width:72px;height:27px;"><span><span style="color:#000">卡萨尔</span></span></div>
<div class="t" style="left:439px;top:423px;width:46px;height:27px;"><span>0.95</span></div>
<div class="t" style="left:486px;top:423px;width:58px;height:27px;"><span><span style="color:#2a5ca8">一球</span></span></div>
<div class="t" style="left:545px;top:423px;width:46px;height:27px;"><span>0.81</span></div>
<div class="t" style="left:592px;top:423px;width:61px;height:27px;"><span>1.52</span></div>
<div class="t" style="left:654px;top:423px;width:62px;height:27px;"><span><span style="color:#4a68a8">3.61</span></span></div>
<div class="t" style="left:717px;top:423px;width:61px;height:27px;"><span>5.98</span></div>
<div class="t" style="left:779px;top:423px;width:38px;height:27px;"><span><span style="color:#008000">负</span></span></div>
<div class="t" style="left:818px;top:423px;width:37px;height:27px;"><span><span style="color:#008000">输</span></span></div>
<div class="t" style="left:856px;top:423px;width:56px;height:27px;"><span><span style="color:#ff0000">大</span></span></div>
<div class="t" style="left:4px;top:451px;width:89px;height:27px;color:#fff"><span>哈萨克杯</span></div>
<div class="t" style="left:94px;top:451px;width:72px;height:27px;"><span>24-05-29</span></div>
<div class="t" style="left:167px;top:451px;width:73px;height:27px;"><span><span style="color:#008000">杜堡尔</span></span></div>
<div class="t" style="left:241px;top:451px;width:85px;height:27px;"><span><span style="color:#ff0000">1-0</span>(1-0)</span></div>
<div class="t" style="left:327px;top:451px;width:38px;height:27px;"><span>3-6</span></div>
<div class="t" style="left:366px;top:451px;width:72px;height:27px;"><span><span style="color:#000">阿迪拿奥</span></span></div>
<div class="t" style="left:439px;top:451px;width:46px;height:27px;"><span>1.03</span></div>
<div class="t" style="left:486px;top:451px;width:58px;height:27px;"><span><span style="color:#2a5ca8">半/一</span></span></div>
<div class="t" style="left:545px;top:451px;width:46px;height:27px;"><span>0.83</span></div>
<div class="t" style="left:592px;top:451px;width:61px;height:27px;"><span>1.71</span></div>
<div class="t" style="left:654px;top:451px;width:62px;height:27px;"><span><span style="color:#4a68a8">3.22</span></span></div>
<div class="t" style="left:717px;top:451px;width:61px;height:27px;"><span>4.89</span></div>
<div class="t" style="left:779px;top:451px;width:38px;height:27px;"><span><span style="color:#ff0000">胜</span></span></div>
<div class="t" style="left:818px;top:451px;width:37px;height:27px;"><span><span style="color:#ff0000">赢</span></span></div>
<div class="t" style="left:856px;top:451px;width:56px;height:27px;"><span><span style="color:#008000">小</span></span></div>
<div class="t" style="left:4px;top:479px;width:89px;height:27px;color:#fff"><span>哈萨克联杯</span></div>
<div class="t" style="left:94px;top:479px;width:72px;height:27px;"><span>24-05-25</span></div>
<div class="t" style="left:167px;top:479px;width:73px;height:27px;"><span><span style="color:#000">热尼斯</span></span></div>
<div class="t" style="left:241px;top:479px;width:85px;height:27px;"><span><span style="color:#ff0000">2-0</span>(1-0)</span></div>
<div class="t" style="left:327px;top:479px;width:38px;height:27px;"><span>0-0</span></div>
<div class="t" style="left:366px;top:479px;width:72px;height:27px;"><span><span style="color:#008000">杜堡尔</span></span></div>
<div class="t" style="left:592px;top:479px;width:61px;height:27px;"><span>2.82</span></div>
<div class="t" style="left:654px;top:479px;width:62px;height:27px;"><span><span style="color:#4a68a8">2.92</span></span></div>
<div class="t" style="left:717px;top:479px;width:61px;height:27px;"><span>2.52</span></div>
<div class="t" style="left:779px;top:479px;width:38px;height:27px;"><span><span style="color:#008000">负</span></span></div>
<div class="t" style="left:4px;top:507px;width:89px;height:27px;color:#fff"><span>哈萨克超</span></div>
<div class="t" style="left:94px;top:507px;width:72px;height:27px;"><span>24-05-19</span></div>
<div class="t" style="left:167px;top:507px;width:73px;height:27px;"><span><span style="color:#000">沙克特</span></span></div>
<div class="t" style="left:241px;top:507px;width:85px;height:27px;"><span><span style="color:#ff0000">1-0</span>(1-0)</span></div>
<div class="t" style="left:327px;top:507px;width:38px;height:27px;"><span>2-5</span></div>
<div class="t" style="left:366px;top:507px;width:72px;height:27px;"><span><span style="color:#008000">杜堡尔</span></span></div>
<div class="t" style="left:439px;top:507px;width:46px;height:27px;"><span>0.92</span></div>
<div class="t" style="left:486px;top:507px;width:58px;height:27px;"><span><span style="color:#2a5ca8"><span style="color:#ff0000">*</span>半球</span></span></div>
<div class="t" style="left:545px;top:507px;width:46px;height:27px;"><span>0.78</span></div>
<div class="t" style="left:592px;top:507px;width:61px;height:27px;"><span>3.86</span></div>
<div class="t" style="left:654px;top:507px;width:62px;height:27px;"><span><span style="color:#4a68a8">3.30</span></span></div>
<div class="t" style="left:717px;top:507px;width:61px;height:27px;"><span>1.87</span></div>
<div class="t" style="left:779px;top:507px;width:38px;height:27px;"><span><span style="color:#008000">负</span></span></div>
<div class="t" style="left:818px;top:507px;width:37px;height:27px;"><span><span style="color:#008000">输</span></span></div>
<div class="t" style="left:856px;top:507px;width:56px;height:27px;"><span><span style="color:#008000">小</span></span></div>
<div style="position:absolute;left:6px;top:534px;width:908px;height:26px;padding-top:1px;line-height:27px;text-align:center;white-space:nowrap;letter-spacing:0.22px;margin-left:-2px">近<span style="color:#ff0000">10</span>场,胜4平1负5, 胜率:<span style="color:#3333ff">40%</span> 赢率:<span style="color:#3333ff">37.5%</span> 大:<span style="color:#3333ff">50%</span> 单率:<span style="color:#3333ff">60%</span></div>
<div style="position:absolute;left:3px;top:562px;width:910px;height:25px;background:#dde4ec"></div>
<div class="t" style="left:23px;top:563px;width:100px;height:25px;color:#3a5fab;font-weight:bold;font-size:13px;justify-content:flex-start"><span>鲁森比洛克</span></div>
<div class="t" style="left:331px;top:564px;width:14px;height:25px;justify-content:flex-start"><span>近</span></div>
<div class="sel" style="left:348px;top:569px;width:29px;height:14px;line-height:15px"><span style="font-size:10.5px">10</span><svg width="9" height="6" viewBox="0 0 9 6" style="position:absolute;right:4px;top:4px"><path d="M1 1 L4.5 4.5 L8 1" fill="none" stroke="#000" stroke-width="2"/></svg></div>
<div class="t" style="left:388px;top:564px;width:14px;height:25px;justify-content:flex-start"><span>场</span></div>
<svg style="position:absolute;left:404px;top:571px" width="13" height="13" viewBox="0 0 13 13"><rect x="0.5" y="0.5" width="12" height="12" rx="2" fill="#fff" stroke="#767676"/></svg>
<div class="t" style="left:422px;top:564px;width:30px;height:25px;justify-content:flex-start"><span>同客</span></div>
<svg style="position:absolute;left:448px;top:571px" width="13" height="13" viewBox="0 0 13 13"><rect x="0" y="0" width="13" height="13" rx="2" fill="#0b6ef2"/><path d="M2.8 6.6 L5.3 9.2 L10.3 3.6" fill="none" stroke="#fff" stroke-width="2.2"/></svg>
<div class="t" style="left:461px;top:564px;width:60px;height:25px;justify-content:flex-start"><span>欧罗巴杯</span></div>
<svg style="position:absolute;left:509px;top:571px" width="13" height="13" viewBox="0 0 13 13"><rect x="0" y="0" width="13" height="13" rx="2" fill="#0b6ef2"/><path d="M2.8 6.6 L5.3 9.2 L10.3 3.6" fill="none" stroke="#fff" stroke-width="2.2"/></svg>
<div class="t" style="left:522px;top:564px;width:60px;height:25px;justify-content:flex-start"><span>球会友谊</span></div>
<svg style="position:absolute;left:570px;top:571px" width="13" height="13" viewBox="0 0 13 13"><rect x="0" y="0" width="13" height="13" rx="2" fill="#0b6ef2"/><path d="M2.8 6.6 L5.3 9.2 L10.3 3.6" fill="none" stroke="#fff" stroke-width="2.2"/></svg>
<div class="t" style="left:583px;top:564px;width:50px;height:25px;justify-content:flex-start"><span>斯伐超</span></div>
<svg style="position:absolute;left:619px;top:571px" width="13" height="13" viewBox="0 0 13 13"><rect x="0" y="0" width="13" height="13" rx="2" fill="#0b6ef2"/><path d="M2.8 6.6 L5.3 9.2 L10.3 3.6" fill="none" stroke="#fff" stroke-width="2.2"/></svg>
<div class="t" style="left:632px;top:564px;width:50px;height:25px;justify-content:flex-start"><span>斯伐杯</span></div>
<div style="position:absolute;left:3px;top:587px;width:910px;height:41px;background:#dde4ec"></div>
<div style="position:absolute;left:3px;top:628px;width:73px;height:28px;background:#6f00d6"></div>
<div style="position:absolute;left:76px;top:628px;width:74px;height:28px;background:#fff"></div>
<div style="position:absolute;left:150px;top:628px;width:85px;height:28px;background:#fff"></div>
<div style="position:absolute;left:235px;top:628px;width:87px;height:28px;background:#fff"></div>
<div style="position:absolute;left:322px;top:628px;width:39px;height:28px;background:#fff"></div>
<div style="position:absolute;left:361px;top:628px;width:74px;height:28px;background:#fff"></div>
<div style="position:absolute;left:435px;top:628px;width:39px;height:28px;background:#fdfaf7"></div>
<div style="position:absolute;left:474px;top:628px;width:75px;height:28px;background:#fdfaf7"></div>
<div style="position:absolute;left:549px;top:628px;width:40px;height:28px;background:#fdfaf7"></div>
<div style="position:absolute;left:589px;top:628px;width:63px;height:28px;background:#eef7fc"></div>
<div style="position:absolute;left:652px;top:628px;width:62px;height:28px;background:#eef7fc"></div>
<div style="position:absolute;left:714px;top:628px;width:63px;height:28px;background:#eef7fc"></div>
<div style="position:absolute;left:777px;top:628px;width:39px;height:28px;background:#fff"></div>
<div style="position:absolute;left:816px;top:628px;width:39px;height:28px;background:#fff"></div>
<div style="position:absolute;left:855px;top:628px;width:57px;height:28px;background:#fff"></div>
<div style="position:absolute;left:3px;top:656px;width:73px;height:28px;background:#00a3a0"></div>
<div style="position:absolute;left:76px;top:656px;width:74px;height:28px;background:#efefef"></div>
<div style="position:absolute;left:150px;top:656px;width:85px;height:28px;background:#efefef"></div>
<div style="position:absolute;left:235px;top:656px;width:87px;height:28px;background:#efefef"></div>
<div style="position:absolute;left:322px;top:656px;width:39px;height:28px;background:#efefef"></div>
<div style="position:absolute;left:361px;top:656px;width:74px;height:28px;background:#efefef"></div>
<div style="position:absolute;left:435px;top:656px;width:39px;height:28px;background:#fdfaf7"></div>
<div style="position:absolute;left:474px;top:656px;width:75px;height:28px;background:#fdfaf7"></div>
<div style="position:absolute;left:549px;top:656px;width:40px;height:28px;background:#fdfaf7"></div>
<div style="position:absolute;left:589px;top:656px;width:63px;height:28px;background:#eef7fc"></div>
<div style="position:absolute;left:652px;top:656px;width:62px;height:28px;background:#eef7fc"></div>
<div style="position:absolute;left:714px;top:656px;width:63px;height:28px;background:#eef7fc"></div>
<div style="position:absolute;left:777px;top:656px;width:39px;height:28px;background:#efefef"></div>
<div style="position:absolute;left:816px;top:656px;width:39px;height:28px;background:#efefef"></div>
<div style="position:absolute;left:855px;top:656px;width:57px;height:28px;background:#efefef"></div>
<div style="position:absolute;left:3px;top:684px;width:73px;height:28px;background:#00a3a0"></div>
<div style="position:absolute;left:76px;top:684px;width:74px;height:28px;background:#fff"></div>
<div style="position:absolute;left:150px;top:684px;width:85px;height:28px;background:#fff"></div>
<div style="position:absolute;left:235px;top:684px;width:87px;height:28px;background:#fff"></div>
<div style="position:absolute;left:322px;top:684px;width:39px;height:28px;background:#fff"></div>
<div style="position:absolute;left:361px;top:684px;width:74px;height:28px;background:#fff"></div>
<div style="position:absolute;left:435px;top:684px;width:39px;height:28px;background:#fdfaf7"></div>
<div style="position:absolute;left:474px;top:684px;width:75px;height:28px;background:#fdfaf7"></div>
<div style="position:absolute;left:549px;top:684px;width:40px;height:28px;background:#fdfaf7"></div>
<div style="position:absolute;left:589px;top:684px;width:63px;height:28px;background:#eef7fc"></div>
<div style="position:absolute;left:652px;top:684px;width:62px;height:28px;background:#eef7fc"></div>
<div style="position:absolute;left:714px;top:684px;width:63px;height:28px;background:#eef7fc"></div>
<div style="position:absolute;left:777px;top:684px;width:39px;height:28px;background:#fff"></div>
<div style="position:absolute;left:816px;top:684px;width:39px;height:28px;background:#fff"></div>
<div style="position:absolute;left:855px;top:684px;width:57px;height:28px;background:#fff"></div>
<div style="position:absolute;left:3px;top:712px;width:73px;height:28px;background:#00a3a0"></div>
<div style="position:absolute;left:76px;top:712px;width:74px;height:28px;background:#efefef"></div>
<div style="position:absolute;left:150px;top:712px;width:85px;height:28px;background:#efefef"></div>
<div style="position:absolute;left:235px;top:712px;width:87px;height:28px;background:#efefef"></div>
<div style="position:absolute;left:322px;top:712px;width:39px;height:28px;background:#efefef"></div>
<div style="position:absolute;left:361px;top:712px;width:74px;height:28px;background:#efefef"></div>
<div style="position:absolute;left:435px;top:712px;width:39px;height:28px;background:#fdfaf7"></div>
<div style="position:absolute;left:474px;top:712px;width:75px;height:28px;background:#fdfaf7"></div>
<div style="position:absolute;left:549px;top:712px;width:40px;height:28px;background:#fdfaf7"></div>
<div style="position:absolute;left:589px;top:712px;width:63px;height:28px;background:#eef7fc"></div>
<div style="position:absolute;left:652px;top:712px;width:62px;height:28px;background:#eef7fc"></div>
<div style="position:absolute;left:714px;top:712px;width:63px;height:28px;background:#eef7fc"></div>
<div style="position:absolute;left:777px;top:712px;width:39px;height:28px;background:#efefef"></div>
<div style="position:absolute;left:816px;top:712px;width:39px;height:28px;background:#efefef"></div>
<div style="position:absolute;left:855px;top:712px;width:57px;height:28px;background:#efefef"></div>
<div style="position:absolute;left:3px;top:740px;width:73px;height:28px;background:#00a3a0"></div>
<div style="position:absolute;left:76px;top:740px;width:74px;height:28px;background:#fff"></div>
<div style="position:absolute;left:150px;top:740px;width:85px;height:28px;background:#fff"></div>
<div style="position:absolute;left:235px;top:740px;width:87px;height:28px;background:#fff"></div>
<div style="position:absolute;left:322px;top:740px;width:39px;height:28px;background:#fff"></div>
<div style="position:absolute;left:361px;top:740px;width:74px;height:28px;background:#fff"></div>
<div style="position:absolute;left:435px;top:740px;width:39px;height:28px;background:#fdfaf7"></div>
<div style="position:absolute;left:474px;top:740px;width:75px;height:28px;background:#fdfaf7"></div>
<div style="position:absolute;left:549px;top:740px;width:40px;height:28px;background:#fdfaf7"></div>
<div style="position:absolute;left:589px;top:740px;width:63px;height:28px;background:#eef7fc"></div>
<div style="position:absolute;left:652px;top:740px;width:62px;height:28px;background:#eef7fc"></div>
<div style="position:absolute;left:714px;top:740px;width:63px;height:28px;background:#eef7fc"></div>
<div style="position:absolute;left:777px;top:740px;width:39px;height:28px;background:#fff"></div>
<div style="position:absolute;left:816px;top:740px;width:39px;height:28px;background:#fff"></div>
<div style="position:absolute;left:855px;top:740px;width:57px;height:28px;background:#fff"></div>
<div style="position:absolute;left:3px;top:768px;width:73px;height:28px;background:#00a3a0"></div>
<div style="position:absolute;left:76px;top:768px;width:74px;height:28px;background:#efefef"></div>
<div style="position:absolute;left:150px;top:768px;width:85px;height:28px;background:#efefef"></div>
<div style="position:absolute;left:235px;top:768px;width:87px;height:28px;background:#efefef"></div>
<div style="position:absolute;left:322px;top:768px;width:39px;height:28px;background:#efefef"></div>
<div style="position:absolute;left:361px;top:768px;width:74px;height:28px;background:#efefef"></div>
<div style="position:absolute;left:435px;top:768px;width:39px;height:28px;background:#fdfaf7"></div>
<div style="position:absolute;left:474px;top:768px;width:75px;height:28px;background:#fdfaf7"></div>
<div style="position:absolute;left:549px;top:768px;width:40px;height:28px;background:#fdfaf7"></div>
<div style="position:absolute;left:589px;top:768px;width:63px;height:28px;background:#eef7fc"></div>
<div style="position:absolute;left:652px;top:768px;width:62px;height:28px;background:#eef7fc"></div>
<div style="position:absolute;left:714px;top:768px;width:63px;height:28px;background:#eef7fc"></div>
<div style="position:absolute;left:777px;top:768px;width:39px;height:28px;background:#efefef"></div>
<div style="position:absolute;left:816px;top:768px;width:39px;height:28px;background:#efefef"></div>
<div style="position:absolute;left:855px;top:768px;width:57px;height:28px;background:#efefef"></div>
<div style="position:absolute;left:3px;top:796px;width:73px;height:28px;background:#00a3a0"></div>
<div style="position:absolute;left:76px;top:796px;width:74px;height:28px;background:#fff"></div>
<div style="position:absolute;left:150px;top:796px;width:85px;height:28px;background:#fff"></div>
<div style="position:absolute;left:235px;top:796px;width:87px;height:28px;background:#fff"></div>
<div style="position:absolute;left:322px;top:796px;width:39px;height:28px;background:#fff"></div>
<div style="position:absolute;left:361px;top:796px;width:74px;height:28px;background:#fff"></div>
<div style="position:absolute;left:435px;top:796px;width:39px;height:28px;background:#fdfaf7"></div>
<div style="position:absolute;left:474px;top:796px;width:75px;height:28px;background:#fdfaf7"></div>
<div style="position:absolute;left:549px;top:796px;width:40px;height:28px;background:#fdfaf7"></div>
<div style="position:absolute;left:589px;top:796px;width:63px;height:28px;background:#eef7fc"></div>
<div style="position:absolute;left:652px;top:796px;width:62px;height:28px;background:#eef7fc"></div>
<div style="position:absolute;left:714px;top:796px;width:63px;height:28px;background:#eef7fc"></div>
<div style="position:absolute;left:777px;top:796px;width:39px;height:28px;background:#fff"></div>
<div style="position:absolute;left:816px;top:796px;width:39px;height:28px;background:#fff"></div>
<div style="position:absolute;left:855px;top:796px;width:57px;height:28px;background:#fff"></div>
<div style="position:absolute;left:3px;top:824px;width:73px;height:28px;background:#b4b0ad"></div>
<div style="position:absolute;left:76px;top:824px;width:74px;height:28px;background:#efefef"></div>
<div style="position:absolute;left:150px;top:824px;width:85px;height:28px;background:#efefef"></div>
<div style="position:absolute;left:235px;top:824px;width:87px;height:28px;background:#efefef"></div>
<div style="position:absolute;left:322px;top:824px;width:39px;height:28px;background:#efefef"></div>
<div style="position:absolute;left:361px;top:824px;width:74px;height:28px;background:#efefef"></div>
<div style="position:absolute;left:435px;top:824px;width:39px;height:28px;background:#fdfaf7"></div>
<div style="position:absolute;left:474px;top:824px;width:75px;height:28px;background:#fdfaf7"></div>
<div style="position:absolute;left:549px;top:824px;width:40px;height:28px;background:#fdfaf7"></div>
<div style="position:absolute;left:589px;top:824px;width:63px;height:28px;background:#eef7fc"></div>
<div style="position:absolute;left:652px;top:824px;width:62px;height:28px;background:#eef7fc"></div>
<div style="position:absolute;left:714px;top:824px;width:63px;height:28px;background:#eef7fc"></div>
<div style="position:absolute;left:777px;top:824px;width:39px;height:28px;background:#efefef"></div>
<div style="position:absolute;left:816px;top:824px;width:39px;height:28px;background:#efefef"></div>
<div style="position:absolute;left:855px;top:824px;width:57px;height:28px;background:#efefef"></div>
<div style="position:absolute;left:3px;top:587px;width:910px;height:1px;background:#c0c0c0"></div>
<div style="position:absolute;left:3px;top:587px;width:1px;height:266px;background:#c0c0c0"></div>
<div style="position:absolute;left:912px;top:587px;width:1px;height:266px;background:#c0c0c0"></div>
<div style="position:absolute;left:76px;top:587px;width:1px;height:41px;background:#c0c0c0"></div>
<div style="position:absolute;left:150px;top:587px;width:1px;height:41px;background:#c0c0c0"></div>
<div style="position:absolute;left:235px;top:587px;width:1px;height:41px;background:#c0c0c0"></div>
<div style="position:absolute;left:322px;top:587px;width:1px;height:41px;background:#c0c0c0"></div>
<div style="position:absolute;left:361px;top:587px;width:1px;height:41px;background:#c0c0c0"></div>
<div style="position:absolute;left:435px;top:587px;width:1px;height:41px;background:#c0c0c0"></div>
<div style="position:absolute;left:474px;top:610px;width:1px;height:18px;background:#c0c0c0"></div>
<div style="position:absolute;left:549px;top:610px;width:1px;height:18px;background:#c0c0c0"></div>
<div style="position:absolute;left:589px;top:587px;width:1px;height:41px;background:#c0c0c0"></div>
<div style="position:absolute;left:652px;top:610px;width:1px;height:18px;background:#c0c0c0"></div>
<div style="position:absolute;left:714px;top:610px;width:1px;height:18px;background:#c0c0c0"></div>
<div style="position:absolute;left:777px;top:587px;width:1px;height:41px;background:#c0c0c0"></div>
<div style="position:absolute;left:816px;top:610px;width:1px;height:18px;background:#c0c0c0"></div>
<div style="position:absolute;left:855px;top:610px;width:1px;height:18px;background:#c0c0c0"></div>
<div style="position:absolute;left:435px;top:610px;width:477px;height:1px;background:#c0c0c0"></div>
<div style="position:absolute;left:3px;top:628px;width:910px;height:1px;background:#c0c0c0"></div>
<div style="position:absolute;left:3px;top:656px;width:910px;height:1px;background:#c0c0c0"></div>
<div style="position:absolute;left:3px;top:684px;width:910px;height:1px;background:#c0c0c0"></div>
<div style="position:absolute;left:3px;top:712px;width:910px;height:1px;background:#c0c0c0"></div>
<div style="position:absolute;left:3px;top:740px;width:910px;height:1px;background:#c0c0c0"></div>
<div style="position:absolute;left:3px;top:768px;width:910px;height:1px;background:#c0c0c0"></div>
<div style="position:absolute;left:3px;top:796px;width:910px;height:1px;background:#c0c0c0"></div>
<div style="position:absolute;left:3px;top:824px;width:910px;height:1px;background:#c0c0c0"></div>
<div style="position:absolute;left:3px;top:852px;width:910px;height:1px;background:#c0c0c0"></div>
<div style="position:absolute;left:76px;top:628px;width:1px;height:224px;background:#c0c0c0"></div>
<div style="position:absolute;left:150px;top:628px;width:1px;height:224px;background:#c0c0c0"></div>
<div style="position:absolute;left:235px;top:628px;width:1px;height:224px;background:#c0c0c0"></div>
<div style="position:absolute;left:322px;top:628px;width:1px;height:224px;background:#c0c0c0"></div>
<div style="position:absolute;left:361px;top:628px;width:1px;height:224px;background:#c0c0c0"></div>
<div style="position:absolute;left:435px;top:628px;width:1px;height:224px;background:#c0c0c0"></div>
<div style="position:absolute;left:474px;top:628px;width:1px;height:224px;background:#c0c0c0"></div>
<div style="position:absolute;left:549px;top:628px;width:1px;height:224px;background:#c0c0c0"></div>
<div style="position:absolute;left:589px;top:628px;width:1px;height:224px;background:#c0c0c0"></div>
<div style="position:absolute;left:652px;top:628px;width:1px;height:224px;background:#c0c0c0"></div>
<div style="position:absolute;left:714px;top:628px;width:1px;height:224px;background:#c0c0c0"></div>
<div style="position:absolute;left:777px;top:628px;width:1px;height:224px;background:#c0c0c0"></div>
<div style="position:absolute;left:816px;top:628px;width:1px;height:224px;background:#c0c0c0"></div>
<div style="position:absolute;left:855px;top:628px;width:1px;height:224px;background:#c0c0c0"></div>
<div class="t" style="left:4px;top:589px;width:72px;height:40px;"><span>类型</span></div>
<div class="t" style="left:77px;top:589px;width:73px;height:40px;"><span>日期</span></div>
<div class="t" style="left:151px;top:589px;width:84px;height:40px;"><span>主场</span></div>
<div class="t" style="left:236px;top:589px;width:86px;height:40px;"><span>比分(半场)</span></div>
<div class="t" style="left:323px;top:589px;width:38px;height:40px;"><span>角球</span></div>
<div class="t" style="left:362px;top:589px;width:73px;height:40px;"><span>客场</span></div>
<div class="t" style="left:436px;top:612px;width:38px;height:17px;"><span>主</span></div>
<div class="t" style="left:475px;top:612px;width:74px;height:17px;"><span>盘口</span></div>
<div class="t" style="left:550px;top:612px;width:39px;height:17px;"><span>客</span></div>
<div class="t" style="left:590px;top:612px;width:62px;height:17px;"><span>主</span></div>
<div class="t" style="left:653px;top:612px;width:61px;height:17px;"><span>和</span></div>
<div class="t" style="left:715px;top:612px;width:62px;height:17px;"><span>客</span></div>
<div class="t" style="left:778px;top:612px;width:38px;height:17px;"><span>胜负</span></div>
<div class="t" style="left:817px;top:612px;width:38px;height:17px;"><span>让球</span></div>
<div class="t" style="left:856px;top:612px;width:56px;height:17px;"><span>进球数</span></div>
<div class="sel" style="left:462px;top:589px;width:54px;height:18px;line-height:21px"><span style="font-size:12px">Crow*</span><svg width="9" height="6" viewBox="0 0 9 6" style="position:absolute;right:4px;top:6px"><path d="M1 1 L4.5 4.5 L8 1" fill="none" stroke="#000" stroke-width="2"/></svg></div>
<div class="sel" style="left:528px;top:589px;width:30px;height:18px;line-height:21px"><span style="font-size:12px">终</span><svg width="9" height="6" viewBox="0 0 9 6" style="position:absolute;right:4px;top:6px"><path d="M1 1 L4.5 4.5 L8 1" fill="none" stroke="#000" stroke-width="2"/></svg></div>
<div class="sel" style="left:620px;top:589px;width:78px;height:18px;line-height:21px"><span style="font-size:12px">胜平负均值</span><svg width="9" height="6" viewBox="0 0 9 6" style="position:absolute;right:4px;top:6px"><path d="M1 1 L4.5 4.5 L8 1" fill="none" stroke="#000" stroke-width="2"/></svg></div>
<div class="sel" style="left:711px;top:589px;width:30px;height:18px;line-height:21px"><span style="font-size:12px">终</span><svg width="9" height="6" viewBox="0 0 9 6" style="position:absolute;right:4px;top:6px"><path d="M1 1 L4.5 4.5 L8 1" fill="none" stroke="#000" stroke-width="2"/></svg></div>
<div class="sel" style="left:821px;top:589px;width:42px;height:18px;line-height:21px"><span style="font-size:12px">全场</span><svg width="9" height="6" viewBox="0 0 9 6" style="position:absolute;right:4px;top:6px"><path d="M1 1 L4.5 4.5 L8 1" fill="none" stroke="#000" stroke-width="2"/></svg></div>
<div class="t" style="left:4px;top:629px;width:72px;height:27px;color:#fff"><span>欧罗巴杯</span></div>
<div class="t" style="left:77px;top:629px;width:73px;height:27px;"><span>24-07-12</span></div>
<div class="t" style="left:151px;top:629px;width:84px;height:27px;"><span><span style="color:#008000">鲁森比洛</span></span></div>
<div class="t" style="left:236px;top:629px;width:86px;height:27px;"><span><span style="color:#ff0000">5-2</span>(3-2)</span></div>
<div class="t" style="left:323px;top:629px;width:38px;height:27px;"><span>5-10</span></div>
<div class="t" style="left:362px;top:629px;width:73px;height:27px;"><span><span style="color:#000">杜堡尔</span></span></div>
<div class="t" style="left:436px;top:629px;width:38px;height:27px;"><span>1.05</span></div>
<div class="t" style="left:475px;top:629px;width:74px;height:27px;"><span><span style="color:#2a5ca8">平手</span></span></div>
<div class="t" style="left:550px;top:629px;width:39px;height:27px;"><span>0.77</span></div>
<div class="t" style="left:590px;top:629px;width:62px;height:27px;"><span>2.69</span></div>
<div class="t" style="left:653px;top:629px;width:61px;height:27px;"><span><span style="color:#4a68a8">3.01</span></span></div>
<div class="t" style="left:715px;top:629px;width:62px;height:27px;"><span>2.66</span></div>
<div class="t" style="left:778px;top:629px;width:38px;height:27px;"><span><span style="color:#ff0000">胜</span></span></div>
<div class="t" style="left:817px;top:629px;width:38px;height:27px;"><span><span style="color:#ff0000">赢</span></span></div>
<div class="t" style="left:856px;top:629px;width:56px;height:27px;"><span><span style="color:#ff0000">大</span></span></div>
<div class="t" style="left:4px;top:657px;width:72px;height:27px;color:#fff"><span>球会友谊</span></div>
<div class="t" style="left:77px;top:657px;width:73px;height:27px;"><span>24-07-03</span></div>
<div class="t" style="left:151px;top:657px;width:84px;height:27px;"><span><span style="color:#008000">鲁森比洛</span></span></div>
<div class="t" style="left:236px;top:657px;width:86px;height:27px;"><span><span style="color:#ff0000">2-2</span>(1-1)</span></div>
<div class="t" style="left:323px;top:657px;width:38px;height:27px;"><span>4-4</span></div>
<div class="t" style="left:362px;top:657px;width:73px;height:27px;"><span><span style="color:#000">兹林</span></span></div>
<div class="t" style="left:436px;top:657px;width:38px;height:27px;"><span>0.84</span></div>
<div class="t" style="left:475px;top:657px;width:74px;height:27px;"><span><span style="color:#2a5ca8">半/一</span></span></div>
<div class="t" style="left:550px;top:657px;width:39px;height:27px;"><span>0.86</span></div>
<div class="t" style="left:590px;top:657px;width:62px;height:27px;"><span>1.72</span></div>
<div class="t" style="left:653px;top:657px;width:61px;height:27px;"><span><span style="color:#4a68a8">3.68</span></span></div>
<div class="t" style="left:715px;top:657px;width:62px;height:27px;"><span>4.10</span></div>
<div class="t" style="left:778px;top:657px;width:38px;height:27px;"><span><span style="color:#0000ff">平</span></span></div>
<div class="t" style="left:817px;top:657px;width:38px;height:27px;"><span><span style="color:#008000">输</span></span></div>
<div class="t" style="left:856px;top:657px;width:56px;height:27px;"><span><span style="color:#ff0000">大</span></span></div>
<div class="t" style="left:4px;top:685px;width:72px;height:27px;color:#fff"><span>球会友谊</span></div>
<div class="t" style="left:77px;top:685px;width:73px;height:27px;"><span>24-06-30</span></div>
<div class="t" style="left:151px;top:685px;width:84px;height:27px;"><span><span style="color:#000">塔特拉</span></span></div>
<div class="t" style="left:236px;top:685px;width:86px;height:27px;"><span><span style="color:#ff0000">3-1</span>(3-0)</span></div>
<div class="t" style="left:323px;top:685px;width:38px;height:27px;"><span>5-7</span></div>
<div class="t" style="left:362px;top:685px;width:73px;height:27px;"><span><span style="color:#008000">鲁森比洛</span></span></div>
<div class="t" style="left:436px;top:685px;width:38px;height:27px;"><span>0.70</span></div>
<div class="t" style="left:475px;top:685px;width:74px;height:27px;"><span><span style="color:#2a5ca8"><span style="color:#ff0000">*</span>一/球半</span></span></div>
<div class="t" style="left:550px;top:685px;width:39px;height:27px;"><span>1.00</span></div>
<div class="t" style="left:590px;top:685px;width:62px;height:27px;"><span>5.23</span></div>
<div class="t" style="left:653px;top:685px;width:61px;height:27px;"><span><span style="color:#4a68a8">4.58</span></span></div>
<div class="t" style="left:715px;top:685px;width:62px;height:27px;"><span>1.44</span></div>
<div class="t" style="left:778px;top:685px;width:38px;height:27px;"><span><span style="color:#008000">负</span></span></div>
<div class="t" style="left:817px;top:685px;width:38px;height:27px;"><span><span style="color:#008000">输</span></span></div>
<div class="t" style="left:856px;top:685px;width:56px;height:27px;"><span><span style="color:#ff0000">大</span></span></div>
<div class="t" style="left:4px;top:713px;width:72px;height:27px;color:#fff"><span>球会友谊</span></div>
<div class="t" style="left:77px;top:713px;width:73px;height:27px;"><span>24-06-25</span></div>
<div class="t" style="left:151px;top:713px;width:84px;height:27px;"><span><span style="color:#008000">鲁森比洛</span></span></div>
<div class="t" style="left:236px;top:713px;width:86px;height:27px;"><span><span style="color:#ff0000">1-1</span>(0-1)</span></div>
<div class="t" style="left:323px;top:713px;width:38px;height:27px;"><span>2-4</span></div>
<div class="t" style="left:362px;top:713px;width:73px;height:27px;"><span><span style="color:#000">布加勒斯</span></span></div>
<div class="t" style="left:590px;top:713px;width:62px;height:27px;"><span>2.50</span></div>
<div class="t" style="left:653px;top:713px;width:61px;height:27px;"><span><span style="color:#4a68a8">3.59</span></span></div>
<div class="t" style="left:715px;top:713px;width:62px;height:27px;"><span>2.45</span></div>
<div class="t" style="left:778px;top:713px;width:38px;height:27px;"><span><span style="color:#0000ff">平</span></span></div>
<div class="t" style="left:4px;top:741px;width:72px;height:27px;color:#fff"><span>球会友谊</span></div>
<div class="t" style="left:77px;top:741px;width:73px;height:27px;"><span>24-06-22</span></div>
<div class="t" style="left:151px;top:741px;width:84px;height:27px;"><span><span style="color:#008000">鲁森比洛</span></span></div>
<div class="t" style="left:236px;top:741px;width:86px;height:27px;"><span><span style="color:#ff0000">2-2</span>(1-0)</span></div>
<div class="t" style="left:323px;top:741px;width:38px;height:27px;"><span>6-3</span></div>
<div class="t" style="left:362px;top:741px;width:73px;height:27px;"><span><span style="color:#000">多明萨尔</span></span></div>
<div class="t" style="left:436px;top:741px;width:38px;height:27px;"><span>0.91</span></div>
<div class="t" style="left:475px;top:741px;width:74px;height:27px;"><span><span style="color:#2a5ca8">平/半</span></span></div>
<div class="t" style="left:550px;top:741px;width:39px;height:27px;"><span>0.79</span></div>
<div class="t" style="left:590px;top:741px;width:62px;height:27px;"><span>2.20</span></div>
<div class="t" style="left:653px;top:741px;width:61px;height:27px;"><span><span style="color:#4a68a8">3.57</span></span></div>
<div class="t" style="left:715px;top:741px;width:62px;height:27px;"><span>2.69</span></div>
<div class="t" style="left:778px;top:741px;width:38px;height:27px;"><span><span style="color:#0000ff">平</span></span></div>
<div class="t" style="left:817px;top:741px;width:38px;height:27px;"><span><span style="color:#008000">输</span></span></div>
<div class="t" style="left:856px;top:741px;width:56px;height:27px;"><span><span style="color:#ff0000">大</span></span></div>
<div class="t" style="left:4px;top:769px;width:72px;height:27px;color:#fff"><span>球会友谊</span></div>
<div class="t" style="left:77px;top:769px;width:73px;height:27px;"><span>24-06-19</span></div>
<div class="t" style="left:151px;top:769px;width:84px;height:27px;"><span><span style="color:#008000">鲁森比洛</span></span></div>
<div class="t" style="left:236px;top:769px;width:86px;height:27px;"><span><span style="color:#ff0000">2-2</span>(2-0)</span></div>
<div class="t" style="left:323px;top:769px;width:38px;height:27px;"><span>0-0</span></div>
<div class="t" style="left:362px;top:769px;width:73px;height:27px;"><span><span style="color:#000">伊拿迪亚</span></span></div>
<div class="t" style="left:590px;top:769px;width:62px;height:27px;"><span>2.21</span></div>
<div class="t" style="left:653px;top:769px;width:61px;height:27px;"><span><span style="color:#4a68a8">3.45</span></span></div>
<div class="t" style="left:715px;top:769px;width:62px;height:27px;"><span>2.80</span></div>
<div class="t" style="left:778px;top:769px;width:38px;height:27px;"><span><span style="color:#0000ff">平</span></span></div>
<div class="t" style="left:4px;top:797px;width:72px;height:27px;color:#fff"><span>球会友谊</span></div>
<div class="t" style="left:77px;top:797px;width:73px;height:27px;"><span>24-06-14</span></div>
<div class="t" style="left:151px;top:797px;width:84px;height:27px;"><span><span style="color:#008000">鲁森比洛</span></span></div>
<div class="t" style="left:236px;top:797px;width:86px;height:27px;"><span><span style="color:#ff0000">4-0</span>(3-0)</span></div>
<div class="t" style="left:323px;top:797px;width:38px;height:27px;"><span>2-1</span></div>
<div class="t" style="left:362px;top:797px;width:73px;height:27px;"><span><span style="color:#000">克曼尼</span></span></div>
<div class="t" style="left:778px;top:797px;width:38px;height:27px;"><span><span style="color:#ff0000">胜</span></span></div>
<div class="t" style="left:4px;top:825px;width:72px;height:27px;color:#fff"><span>斯伐超</span></div>
<div class="t" style="left:77px;top:825px;width:73px;height:27px;"><span>24-05-18</span></div>
<div class="t" style="left:151px;top:825px;width:84px;height:27px;"><span><span style="color:#000">布拉迪斯</span></span></div>
<div class="t" style="left:236px;top:825px;width:86px;height:27px;"><span><span style="color:#ff0000">5-1</span>(2-1)</span></div>
<div class="t" style="left:323px;top:825px;width:38px;height:27px;"><span>4-2</span></div>
<div class="t" style="left:362px;top:825px;width:73px;height:27px;"><span><span style="color:#008000">鲁森比洛</span></span></div>
<div class="t" style="left:436px;top:825px;width:38px;height:27px;"><span>0.83</span></div>
<div class="t" style="left:475px;top:825px;width:74px;height:27px;"><span><span style="color:#2a5ca8">球半</span></span></div>
<div class="t" style="left:550px;top:825px;width:39px;height:27px;"><span>0.90</span></div>
<div class="t" style="left:590px;top:825px;width:62px;height:27px;"><span>1.28</span></div>
<div class="t" style="left:653px;top:825px;width:61px;height:27px;"><span><span style="color:#4a68a8">5.24</span></span></div>
<div class="t" style="left:715px;top:825px;width:62px;height:27px;"><span>8.24</span></div>
<div class="t" style="left:778px;top:825px;width:38px;height:27px;"><span><span style="color:#008000">负</span></span></div>
<div class="t" style="left:817px;top:825px;width:38px;height:27px;"><span><span style="color:#008000">输</span></span></div>
<div class="t" style="left:856px;top:825px;width:56px;height:27px;"><span><span style="color:#ff0000">大</span></span></div>
<div style="position:absolute;left:919px;top:234px;width:40px;height:32px;background:#1a96d4;border-radius:4px"></div>
<div class="t" style="left:933px;top:234px;width:30px;height:32px;color:#fff;font-size:12px;justify-content:flex-start"><span>定制</span></div>
</body></html>
